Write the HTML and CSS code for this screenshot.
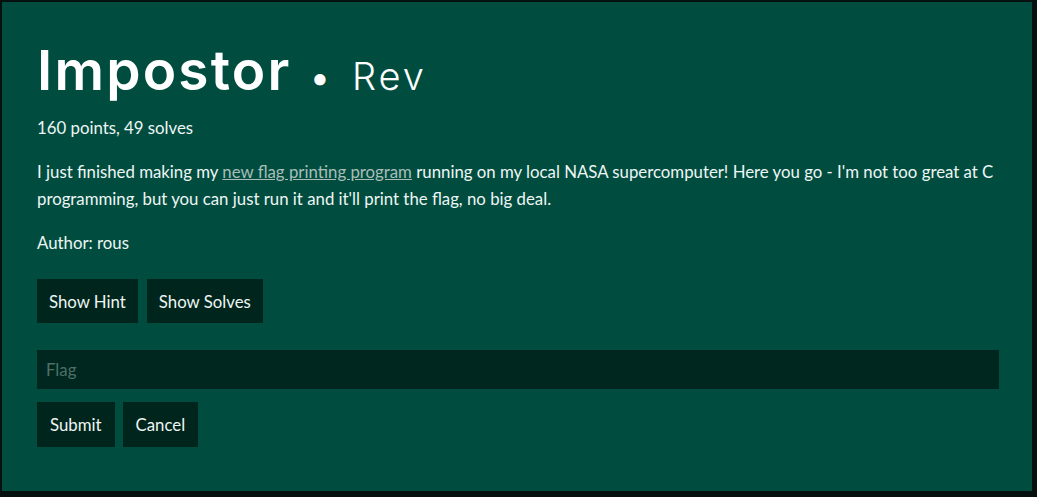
FILE: index.html
```html
<!DOCTYPE html>
<html lang="en">
<head>
<meta charset="utf-8">
<title>Impostor</title>
<link rel="stylesheet" href="styles.css">
</head>
<body>
<div class="backdrop">
  <div class="modal">
    <h1 class="title">Impostor <span class="sep">•</span> <span class="cat">Rev</span></h1>
    <p class="meta">160 points, 49 solves</p>
    <p class="desc">I just finished making my <a href="#" class="link">new flag printing program</a> running on my local NASA supercomputer! Here you go - I'm not too great at C programming, but you can just run it and it'll print the flag, no big deal.</p>
    <p class="author">Author: rous</p>
    <div class="actions">
      <button class="btn">Show Hint</button>
      <button class="btn">Show Solves</button>
    </div>
    <form class="flag-form">
      <input class="flag-input" type="text" placeholder="Flag">
      <div class="form-actions">
        <button type="button" class="btn btn-submit">Submit</button>
        <button type="button" class="btn btn-cancel">Cancel</button>
      </div>
    </form>
  </div>
</div>
</body>
</html>
```
FILE: styles.css
```css
* { box-sizing: border-box; }
html, body {
  margin: 0;
  padding: 0;
  background: #04110e;
  height: 100%;
}
body {
  font-family: Lato, "Open Sans", sans-serif;
  color: #eef6f4;
  font-size: 16.8px;
}
.backdrop {
  padding: 2px 5px 6px 2px;
  height: 100%;
}
.modal {
  background: #004d40;
  height: 489px;
  padding: 38px 33px 0 35px;
}
.title {
  margin: 0;
  font-family: Inter, sans-serif;
  font-weight: 600;
  font-size: 55px;
  line-height: 60px;
  color: #ffffff;
  letter-spacing: 2.2px;
}
.sep {
  font-size: 36px;
  font-weight: 400;
  margin-left: 2px;
  letter-spacing: 0;
}
.cat {
  font-size: 38px;
  font-weight: 300;
  margin-left: 6px;
  letter-spacing: 3px;
}
.meta {
  margin: 7px 0 0;
  line-height: 27px;
}
.desc {
  margin: 17px 0 0;
  line-height: 27px;
}
.link {
  color: #a9bdb8;
  text-decoration: underline;
}
.author {
  margin: 17px 0 0;
  line-height: 27px;
}
.actions {
  display: flex;
  gap: 9px;
  margin-top: 23px;
}
.btn {
  background: #00251c;
  color: #eef6f4;
  border: none;
  font-family: inherit;
  font-size: 16.8px;
  height: 44px;
  padding: 0 12px;
  cursor: pointer;
}
.flag-form {
  margin-top: 27px;
}
.flag-input {
  display: block;
  width: 962px;
  height: 39px;
  background: #00271f;
  border: none;
  outline: none;
  padding: 0 9px;
  font-family: inherit;
  font-size: 16.8px;
  color: #eef6f4;
}
.flag-input::placeholder {
  color: #4d6f67;
}
.form-actions {
  display: flex;
  gap: 8px;
  margin-top: 13px;
}
.btn-submit {
  height: 45px;
  padding: 0 13px;
}
.btn-cancel {
  height: 45px;
  padding: 0 13px;
}
```
